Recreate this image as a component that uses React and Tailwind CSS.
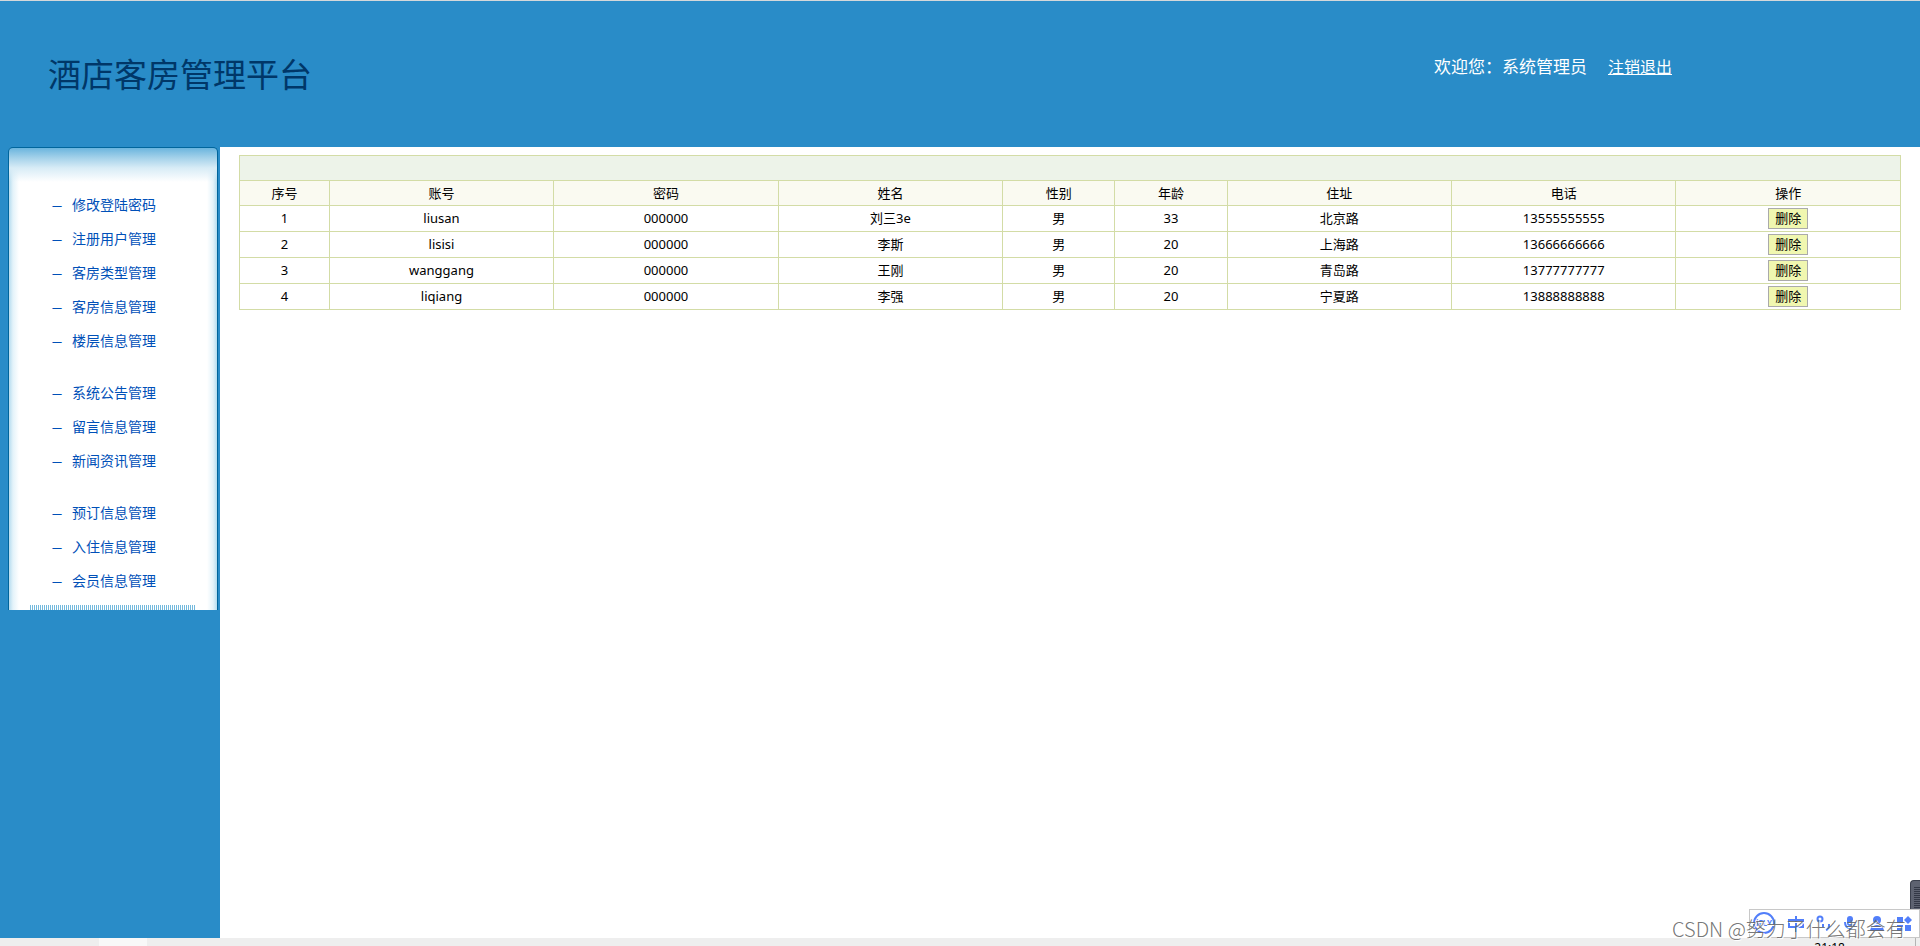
import { useState } from "react";

const menuGroups = [
  ["修改登陆密码", "注册用户管理", "客房类型管理", "客房信息管理", "楼层信息管理"],
  ["系统公告管理", "留言信息管理", "新闻资讯管理"],
  ["预订信息管理", "入住信息管理", "会员信息管理"],
];

const columns = [
  { title: "序号", width: "w-[4%]" },
  { title: "账号", width: "w-[10%]" },
  { title: "密码", width: "w-[10%]" },
  { title: "姓名", width: "w-[10%]" },
  { title: "性别", width: "w-[5%]" },
  { title: "年龄", width: "w-[5%]" },
  { title: "住址", width: "w-[10%]" },
  { title: "电话", width: "w-[10%]" },
  { title: "操作", width: "w-[10%]" },
];

const initialUsers = [
  { id: 1, account: "liusan", password: "000000", name: "刘三3e", sex: "男", age: 33, address: "北京路", phone: "13555555555" },
  { id: 2, account: "lisisi", password: "000000", name: "李斯", sex: "男", age: 20, address: "上海路", phone: "13666666666" },
  { id: 3, account: "wanggang", password: "000000", name: "王刚", sex: "男", age: 20, address: "青岛路", phone: "13777777777" },
  { id: 4, account: "liqiang", password: "000000", name: "李强", sex: "男", age: 20, address: "宁夏路", phone: "13888888888" },
];

const Header = () => (
  <header className="flex h-[147px] items-start justify-between border-t border-[#d4d8da] pl-12 pr-[248px] text-white">
    <h1 className="mt-12 text-[33px] leading-[52px] font-normal text-[#003768]">酒店客房管理平台</h1>
    <div className="mt-[54px] flex items-center gap-[21px] leading-6">
      <span className="text-[17px]">欢迎您：系统管理员</span>
      <a href="#logout" className="text-base leading-6 underline">
        注销退出
      </a>
    </div>
  </header>
);

const Sidebar = () => (
  <aside className="w-[220px] shrink-0 pl-2">
    <nav className="flex h-[463px] w-[210px] flex-col rounded-t-[5px] border border-b-0 border-[#00659c] bg-[linear-gradient(to_bottom,#6bb5de_0px,#a5d2ea_10px,#d8ecf6_20px,transparent_34px),linear-gradient(to_right,#b5dcef_0px,#e4f3fa_4px,white_10px,white_calc(100%-10px),#e4f3fa_calc(100%-4px),#b5dcef_100%)] pt-10">
      {menuGroups.map((group, i) => (
        <ul key={i} className="mb-[18px] pl-[43px]">
          {group.map((item) => (
            <li key={item} className="h-[34px]">
              <a href="#menu" className="flex h-[34px] items-center gap-[10px] text-sm text-[#0050b8]">
                <span className="text-[10px]">—</span>
                {item}
              </a>
            </li>
          ))}
        </ul>
      ))}
      {/* striped footer */}
      <div className="-mt-[11px] ml-[21px] h-[6px] w-[165px] bg-[repeating-linear-gradient(to_right,#73b9dd_0px,#73b9dd_1px,white_1px,white_2px)]" />
    </nav>
  </aside>
);

const UserTable = ({ users, onDelete }) => (
  <table className="w-full table-fixed border-collapse text-center text-[13px] leading-5 text-black">
    <colgroup>
      {columns.map((c) => (
        <col key={c.title} className={c.width} />
      ))}
    </colgroup>
    <thead>
      <tr className="h-[25px] bg-[#edf3e9]">
        <td colSpan={9} className="border border-[#d3dca6]" />
      </tr>
      <tr className="h-[25px] bg-[#fafaf1]">
        {columns.map((c) => (
          <th key={c.title} className="border border-[#d3dca6] p-0 font-normal">
            {c.title}
          </th>
        ))}
      </tr>
    </thead>
    <tbody>
      {users.map((u, idx) => (
        <tr key={u.id} className="h-[26px]">
          {[idx + 1, u.account, u.password, u.name, u.sex, u.age, u.address, u.phone].map((value, i) => (
            <td key={i} className="border border-[#d3dca6] p-0 pb-[2px]">
              {value}
            </td>
          ))}
          <td className="border border-[#d3dca6] p-0">
            <button
              className="mx-auto block h-[21px] w-10 border border-[#aaaaaa] bg-[#f0f7b0] leading-[19px]"
              onClick={() => onDelete(u.id)}
            >
              删除
            </button>
          </td>
        </tr>
      ))}
    </tbody>
  </table>
);

// floating input method bar in the lower right corner
const InputBar = () => (
  <div className="absolute right-0 bottom-2 h-[58px] w-[248px]">
    <div className="absolute right-0 bottom-0 h-[58px] w-[10px] rounded-tl border-t border-l border-[#3a3f4c] bg-[#5d6270] pt-[6px] pl-[3px]">
      <div className="h-6 bg-[repeating-linear-gradient(to_bottom,#333846_0px,#333846_1px,transparent_1px,transparent_2px)]" />
    </div>
    <div className="absolute right-0 bottom-0 h-[29px] w-[171px] border border-[#c8c8c8] bg-white">
      <svg viewBox="0 0 169 27" className="h-[27px] w-[169px]" fill="none" stroke="#527ffa" strokeWidth="2">
        <circle cx="14" cy="13" r="10" />
        <text x="14" y="16" textAnchor="middle" fontSize="8" fontWeight="700" fill="#527ffa" stroke="none">
          iFLY
        </text>
        <path d="M39 10h14v7H39zM46 6v16" />
        <circle cx="70" cy="9" r="2.5" />
        <path d="M73 14v3M79 14v2q0 3-3 4" />
        <rect x="97" y="6" width="6" height="10" rx="3" fill="#527ffa" stroke="none" />
        <path d="M95 12q0 6 5 6t5-6M100 18v4" />
        <g fill="#527ffa" stroke="none">
          <circle cx="127" cy="10" r="4" />
          <path d="M120 22q0-7 7-7t7 7z" />
          <rect x="147" y="7" width="6" height="6" />
          <rect x="147" y="15" width="6" height="6" />
          <rect x="155" y="15" width="6" height="6" />
          <path d="M158 6l4 4-4 4-4-4z" />
        </g>
      </svg>
    </div>
    <p className="absolute -bottom-1 left-0 whitespace-nowrap font-['Noto_Sans_CJK_SC',sans-serif] text-xl leading-[26px] font-light text-[#666666]/90 [text-shadow:1px_1px_0_#ffffff]">
      CSDN @努力了什么都会有
    </p>
  </div>
);

const App = () => {
  const [users, setUsers] = useState(initialUsers);

  const handleDelete = (id) => {
    setUsers(users.filter((u) => u.id !== id));
  };

  return (
    <div className="relative flex min-h-screen flex-col overflow-hidden bg-[#298cc8] font-['Noto_Sans','Noto_Sans_CJK_SC',sans-serif]">
      <Header />
      <div className="flex flex-1">
        <Sidebar />
        <main className="flex-1 bg-white pt-2 pr-[19px] pl-[19px]">
          <UserTable users={users} onDelete={handleDelete} />
        </main>
      </div>

      {/* Taskbar */}
      <footer className="flex h-2 justify-between overflow-hidden bg-[#eeeeee] pl-[99px]">
        <div className="h-2 w-12 bg-[#f8f8f8]" />
        <div className="mr-1 flex h-2 border-r border-[#b4b4b4] pr-[70px]">
          <span className="pt-1 text-xs leading-3 text-black">21:18</span>
        </div>
      </footer>

      <InputBar />
    </div>
  );
};

export default App;
